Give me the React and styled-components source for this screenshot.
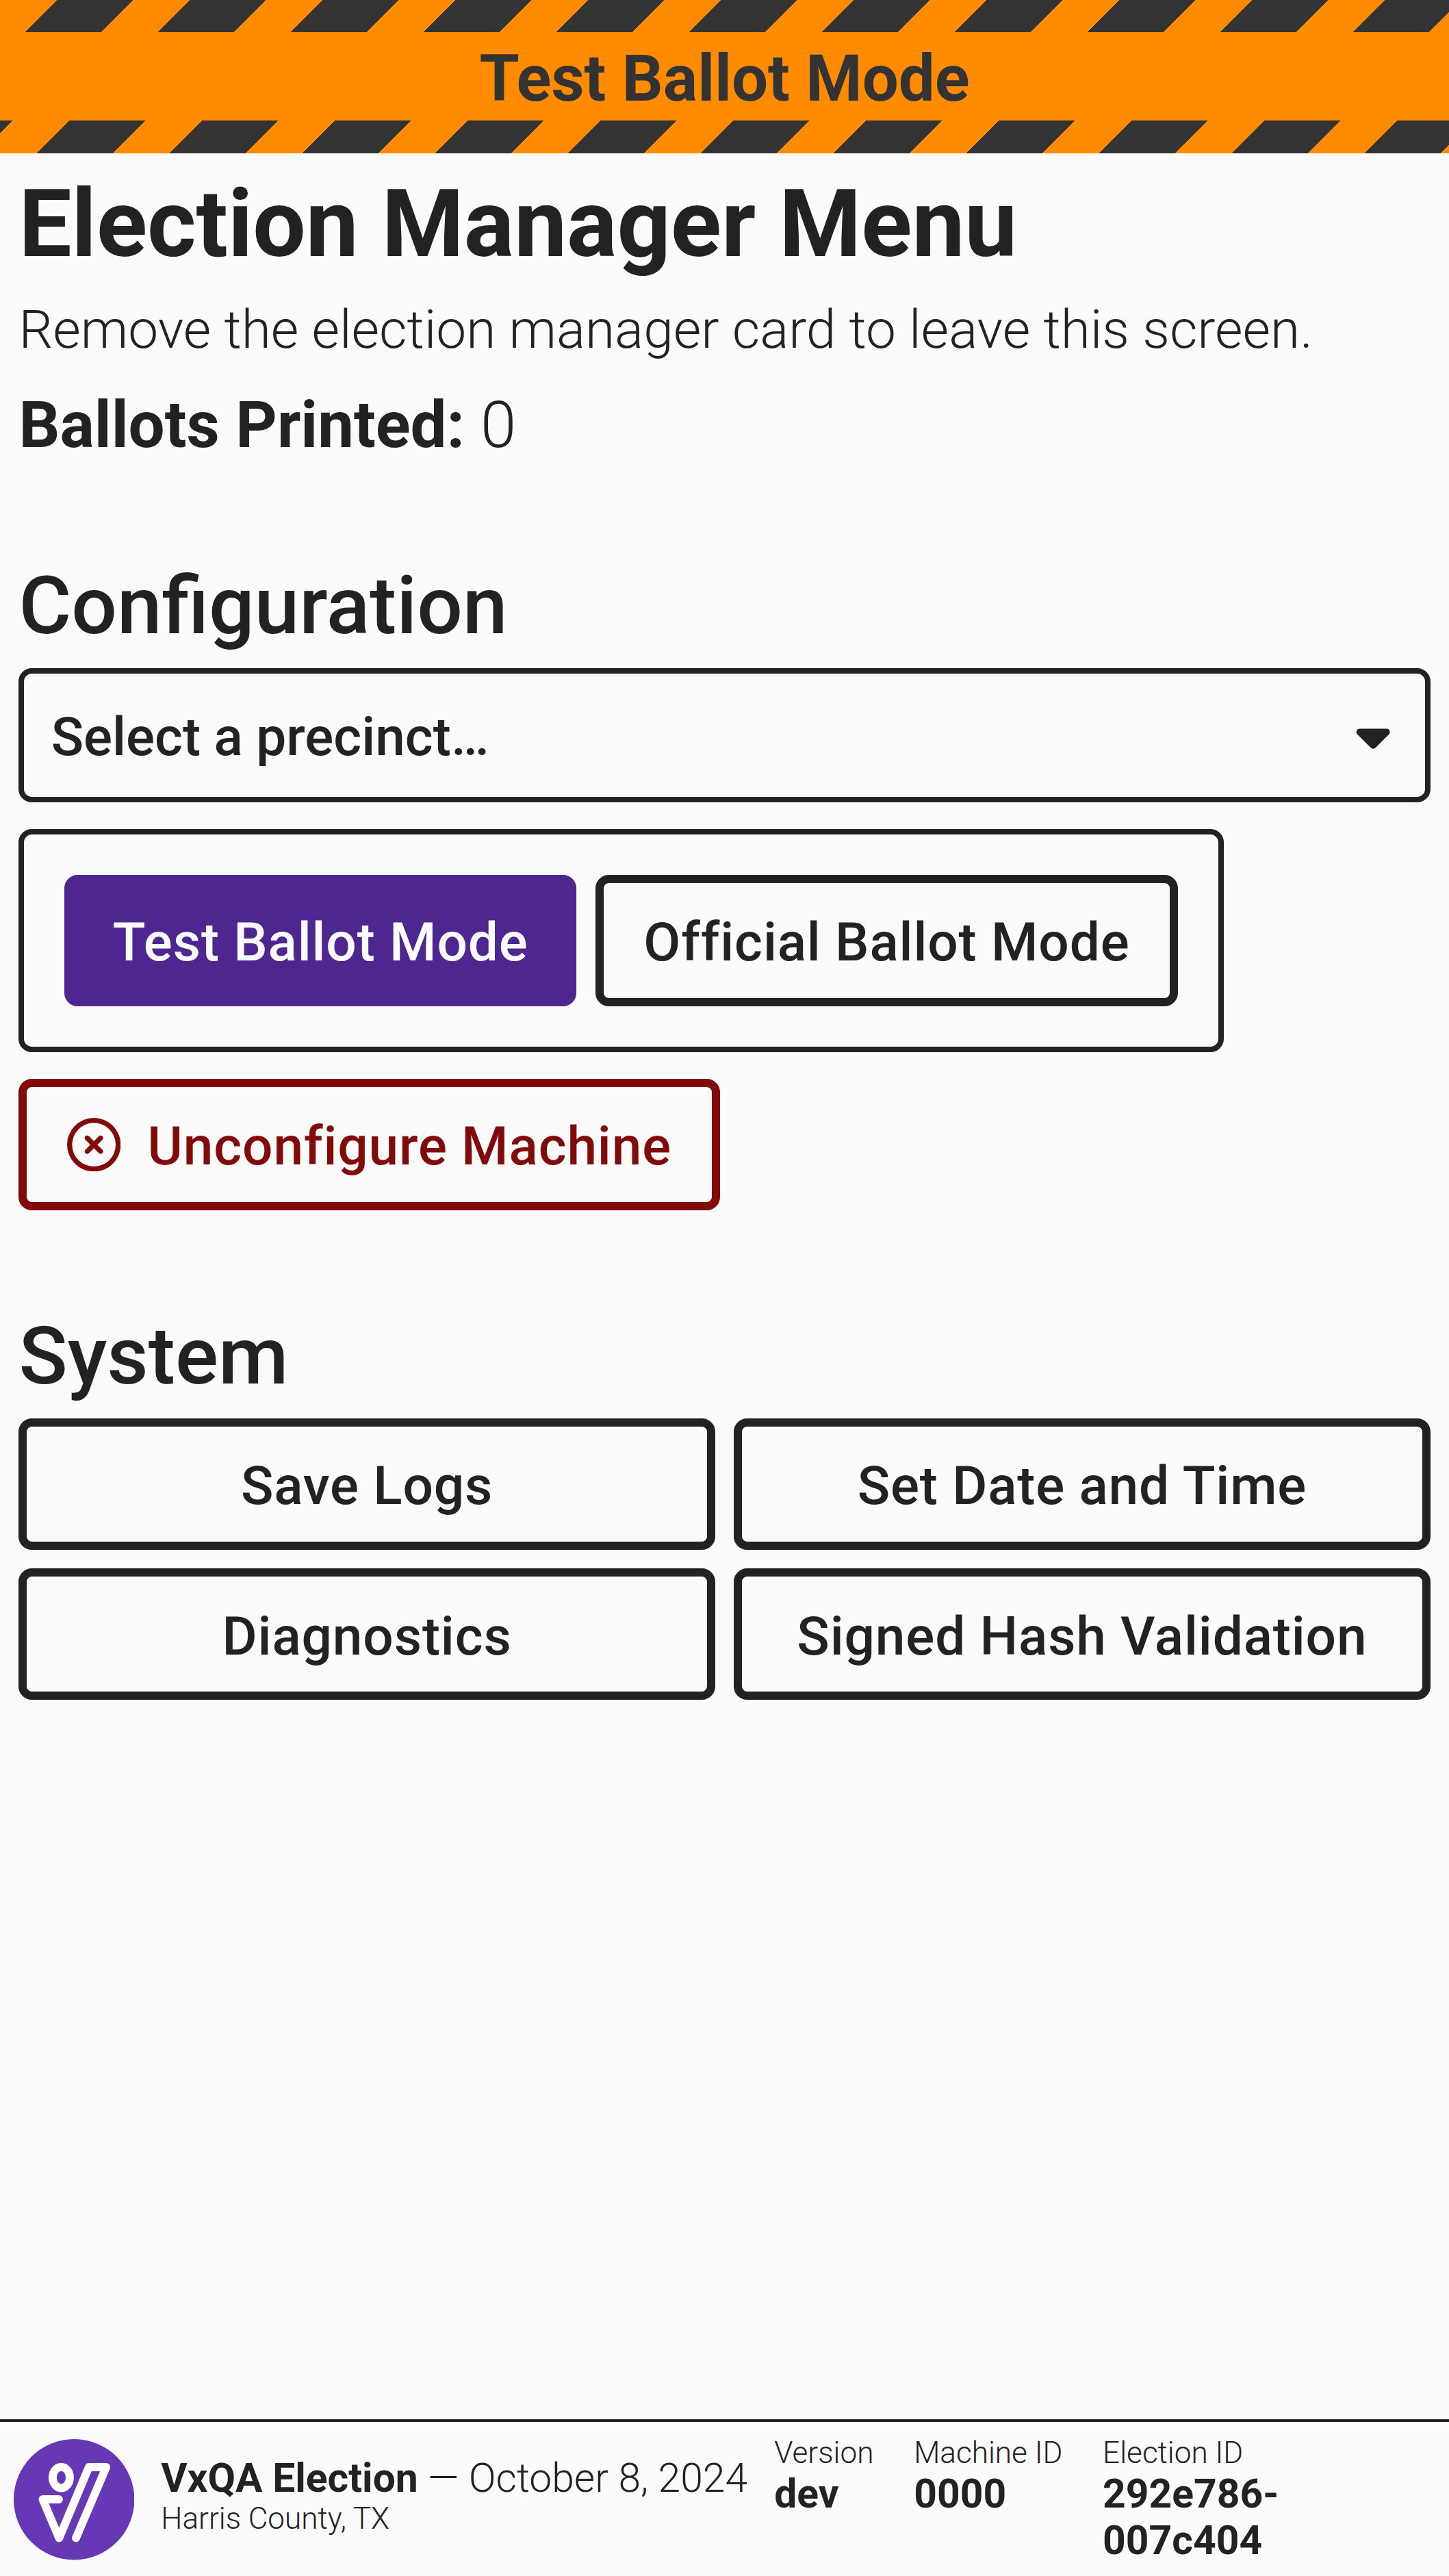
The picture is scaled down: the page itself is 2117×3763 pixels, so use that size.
import React from 'react';
import styled, { createGlobalStyle, css } from 'styled-components';
import { FaCaretDown, FaRegCircleXmark } from 'react-icons/fa6';

const color = {
  background: '#fafafa',
  ink: '#222222',
  warning: '#ff8c00',
  stripe: '#333333',
  primary: '#4d2690',
  danger: '#810b0b',
  brand: '#6638b6',
};

const GlobalStyle = createGlobalStyle`
  *, *::before, *::after { box-sizing: border-box; }
  body {
    margin: 0;
    background: ${color.background};
    color: ${color.ink};
    font-family: Roboto, sans-serif;
    font-size: 78.4px;
    font-weight: 300;
    line-height: 1.15;
  }
  h1, h2, h3, p { margin: 0; }
`;

const Screen = styled.div`
  display: flex;
  flex-direction: column;
  height: 3763px;
`;

const Banner = styled.header`
  flex: none;
  height: 223.5px;
  padding: 47px 0;
  background: repeating-linear-gradient(
    135deg,
    ${color.warning} 0,
    ${color.warning} 58.81px,
    ${color.stripe} 58.81px,
    ${color.stripe} 137.21px
  );
`;

const BannerLabel = styled.div`
  height: 129.4px;
  padding-top: 13.8px;
  background: ${color.warning};
  color: ${color.stripe};
  font-size: 94.09px;
  font-weight: 700;
  text-align: center;
`;

const Main = styled.main`
  flex: 1;
  padding: 25.4px 27.44px 0;
`;

const Title = styled.h1`
  font-size: 137.2px;
  font-weight: 700;
  margin-bottom: 29.1px;
`;

const Count = styled.p`
  margin-top: 40.7px;
  font-size: 94.09px;
`;

const Section = styled.section`
  margin-top: ${(p) => p.$gap}px;
`;

const SectionTitle = styled.h2`
  margin-bottom: 22.9px;
  font-size: 117.6px;
  font-weight: 500;
`;

const Stack = styled.div`
  display: flex;
  flex-direction: column;
  align-items: flex-start;
  gap: 39.2px;
`;

const Select = styled.div`
  display: flex;
  align-items: center;
  justify-content: space-between;
  width: 100%;
  height: 195.8px;
  padding: 0 35.9px 0 39.2px;
  border: 8px solid ${color.ink};
  border-radius: 19.6px;
  font-weight: 500;

  svg { display: block; }
`;

const ModeGroup = styled.div`
  display: flex;
  gap: 27.44px;
  padding: 58.8px;
  border: 8px solid ${color.ink};
  border-radius: 19.6px;
`;

const Button = styled.button`
  display: flex;
  align-items: center;
  justify-content: center;
  gap: 39.2px;
  height: 192.1px;
  margin: 0;
  padding: 0 58.6px;
  border: 12px solid currentColor;
  border-radius: 19.6px;
  background: transparent;
  color: ${(p) => (p.$variant === 'danger' ? color.danger : color.ink)};
  font: inherit;
  font-weight: 500;
  letter-spacing: 0.865px;
  white-space: nowrap;

  svg { display: block; }

  ${(p) => p.$variant === 'primary' && css`
    border-color: ${color.primary};
    background: ${color.primary};
    color: ${color.background};
  `}
`;

const Label = styled.span`
  padding-top: 4.8px;
`;

const ButtonGrid = styled.div`
  display: grid;
  grid-template-columns: 1fr 1fr;
  gap: 27.44px;
`;

const Footer = styled.footer`
  display: flex;
  flex: none;
  align-items: center;
  gap: 39.2px;
  height: 229.2px;
  padding: 2.1px 19.6px 0;
  border-top: 4px solid ${color.ink};
  font-size: 58.8px;
`;

const Seal = styled.svg`
  flex: none;
  display: block;
  width: 176.4px;
  height: 176.4px;
`;

const ElectionInfo = styled.div`
  padding-bottom: 12px;
  white-space: nowrap;
`;

const Small = styled.div`
  font-size: 44.1px;
`;

const Facts = styled.div`
  display: flex;
  gap: 58.8px;
`;

const FactBox = styled.div`
  max-width: 400px;
`;

const Strong = styled.span`
  font-weight: 700;
`;

function Fact({ label, value }) {
  return (
    <FactBox>
      <Small>{label}</Small>
      <Strong>{value}</Strong>
    </FactBox>
  );
}

function ElectionSeal() {
  return (
    <Seal viewBox="0 0 529 529" aria-hidden="true">
      <circle cx="264.5" cy="264.5" r="264.5" fill={color.brand} />
      <g
        fill="none"
        stroke="#fff"
        strokeWidth="35.5"
        strokeLinecap="round"
        strokeLinejoin="round"
      >
        <ellipse cx="208.3" cy="168.3" rx="37.6" ry="46" />
        <path d="M198 264H127L199 433.5L329.5 123H405.5L273 433.5" />
      </g>
    </Seal>
  );
}

export default function App() {
  return (
    <Screen>
      <GlobalStyle />
      <Banner>
        <BannerLabel>Test Ballot Mode</BannerLabel>
      </Banner>
      <Main>
        <Title>Election Manager Menu</Title>
        <p>Remove the election manager card to leave this screen.</p>
        <Count>
          <Strong>Ballots Printed:</Strong> 0
        </Count>
        <Section $gap={143.3}>
          <SectionTitle>Configuration</SectionTitle>
          <Stack>
            <Select>
              <Label>Select a precinct…</Label>
              <FaCaretDown />
            </Select>
            <ModeGroup>
              <Button $variant="primary">
                <Label>Test Ballot Mode</Label>
              </Button>
              <Button>
                <Label>Official Ballot Mode</Label>
              </Button>
            </ModeGroup>
            <Button $variant="danger">
              <FaRegCircleXmark />
              <Label>Unconfigure Machine</Label>
            </Button>
          </Stack>
        </Section>
        <Section $gap={145.5}>
          <SectionTitle>System</SectionTitle>
          <ButtonGrid>
            <Button>
              <Label>Save Logs</Label>
            </Button>
            <Button>
              <Label>Set Date and Time</Label>
            </Button>
            <Button>
              <Label>Diagnostics</Label>
            </Button>
            <Button>
              <Label>Signed Hash Validation</Label>
            </Button>
          </ButtonGrid>
        </Section>
      </Main>
      <Footer>
        <ElectionSeal />
        <ElectionInfo>
          <div>
            <Strong>VxQA Election</Strong> — October 8, 2024
          </div>
          <Small>Harris County, TX</Small>
        </ElectionInfo>
        <Facts>
          <Fact label="Version" value="dev" />
          <Fact label="Machine ID" value="0000" />
          <Fact label="Election ID" value="292e786-007c404" />
        </Facts>
      </Footer>
    </Screen>
  );
}
